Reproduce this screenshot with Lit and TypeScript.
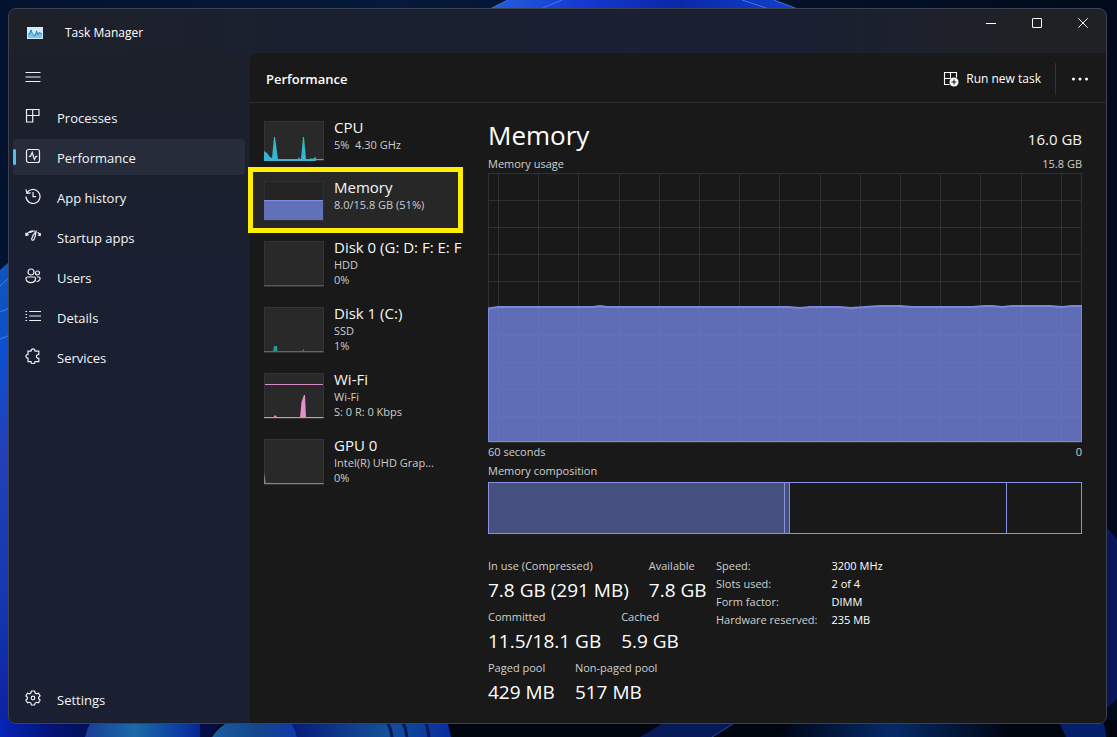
import { LitElement, html, svg, css } from "lit";
import { customElement } from "lit/decorators.js";
import { classMap } from "lit/directives/class-map.js";

const navItems = [
  { label: "Processes", icon: svg`<path d="M1.500 1.500h12.500v6H7.700v6.500H1.500zM7.700 1.500v6M1.500 7.500h6.200"/>` },
  { label: "Performance", icon: svg`<rect x="1.500" y="1.500" width="13" height="13" rx="2"/><path d="M3.800 8.300h1.700l1.700-3.800 2.200 7L11 8.300h1.400"/>` },
  { label: "App history", icon: svg`<path d="M1.800 5.200A7 7 0 1 1 1 8.500M1 1.400l.9 3.900 3.900-.4M8 4v4.600h3"/>` },
  { label: "Startup apps", icon: svg`<path d="M1 7.500c1-2.300 3-4 5.300-4.500M.8 4.700L1 7.500l2.800-.8M15.200 7.500c-.4-1.300-1.300-2.500-2.600-3.300M12.700 7l2.500.5.1-2.600M11 3.400c-1.800 2-3.800 5.600-4.300 7.300-.2 1.700 1.700 2.100 2.400.6.800-1.600 1.700-5.200 1.900-7.900zM4.500 4.600L8 3.200M6.300 3h3.700"/>` },
  { label: "Users", icon: svg`<circle cx="6" cy="4" r="3"/><circle cx="12.500" cy="5" r="2"/><path d="M2.500 9h6.500a1.500 1.500 0 0 1 1.500 1.500c0 2.600-2 4.200-4.700 4.200S1 13 1 10.500A1.500 1.500 0 0 1 2.500 9zM12 9h1.800a1.300 1.300 0 0 1 1.300 1.300c0 2-1.500 3.200-3.600 3.100"/>` },
  { label: "Details", icon: svg`<path d="M4.200 3.500H16M4.200 8H16M4.200 12.500H16M.5 3.500h1.600M.5 6.500h1.600M.5 9.500h1.600M.5 12.500h1.600"/>` },
  { label: "Services", icon: svg`<path d="M3 3.200h3c-.3-3 4.300-3 4 0h3.800v3.300c-3.200-.2-3.200 4 0 3.800v3.400H10c.2 2.700-4.200 2.700-4 0H3v-3.500c-2.700.2-2.700-3.900 0-3.700z"/>` },
];

const resources = [
  {
    name: "CPU", lines: ["5%  4.30 GHz"], height: 40, color: "#35b5cf",
    graph: svg`<path fill="#35b5cf" stroke="none" d="M0 30l3 2 3 4 2 1 2-21h1l3 22h20l1-2 1 2h1l2-22h1l2 22h4l1-1 1 1 4-2v4H0z"/><path d="M0 38.500h59.500"/>`,
  },
  {
    name: "Memory", lines: ["8.0/15.8 GB (51%)"], height: 40, color: "#7f8ce0", current: true,
    graph: svg`<path fill="#6270ba" stroke="none" d="M0 20h59v19H0z"/><path d="M0 19.500h59"/>`,
  },
  {
    name: "Disk 0 (G: D: F: E: F", lines: ["HDD", "0%"], height: 46, color: "#2f6f69",
    graph: svg`<path d="M0 44.500h59.500"/>`,
  },
  {
    name: "Disk 1 (C:)", lines: ["SSD", "1%"], height: 46, color: "#2f7d78",
    graph: svg`<path fill="#2b9a92" stroke="none" d="M9 45l1-6h3l.5 6zM38 45l1.500-3 1.500 3z"/><path d="M0 44.500h59.500"/>`,
  },
  {
    name: "Wi-Fi", lines: ["Wi-Fi", "S: 0 R: 0 Kbps"], height: 46, color: "#d98cc6",
    graph: svg`<path fill="#e78fd0" stroke="none" d="M36 45l1.500-16L40 22h1l1 23zM9 45l2-3 3 3z"/><path d="M1 11.500h58M0 44.500h59.500"/>`,
  },
  {
    name: "GPU 0", lines: ["Intel(R) UHD Grap...", "0%"], height: 46, color: "#87799f",
    graph: svg`<path fill="#87799f" stroke="none" d="M0 45V33l2 12zM4 45l1-2 1 2z"/><path d="M0 44.500h59.500"/>`,
  },
];

const statRows = [
  [["In use (Compressed)", "7.8 GB (291 MB)"], ["Available", "7.8 GB"]],
  [["Committed", "11.5/18.1 GB"], ["Cached", "5.9 GB"]],
  [["Paged pool", "429 MB"], ["Non-paged pool", "517 MB"]],
];

const hardware = [
  ["Speed:", "3200 MHz"],
  ["Slots used:", "2 of 4"],
  ["Form factor:", "DIMM"],
  ["Hardware reserved:", "235 MB"],
];

const composition = [
  { share: 296, used: true },
  { share: 5, used: true },
  { share: 217, used: false },
  { share: 74, used: false },
];

const usage = "M0 135.500L10 134H105l7-1 7 1H300l12 1 10-1h30l11 1 14-1 15-1h20l12 1h60l13-1h8l9 1 10-1h38l12 1 10-1h10";

@customElement("tm-sidebar")
export class TmSidebar extends LitElement {
  static styles = css`
    :host { display: flex; flex-direction: column; padding: 8px 5px 6px 4px; }
    button { font: inherit; color: inherit; background: none; border: 0; padding: 0; }
    .menu { width: 40px; height: 32px; display: grid; place-items: center; margin-bottom: 6px; }
    nav { display: flex; flex-direction: column; gap: 4px; flex: 1; }
    .item {
      display: flex; align-items: center; gap: 16px; height: 36px; padding: 0 12px;
      color: #f4f5f7; text-decoration: none; border-radius: 4px; position: relative;
      line-height: 20px;
    }
    .item span { padding-top: 1px; }
    .item.current { background: #272c3a; }
    .item.current::before {
      content: ""; position: absolute; left: 0; top: 10px; width: 3px; height: 16px;
      border-radius: 2px; background: #55bdf5;
    }
    .last { margin-top: auto; }
    svg { width: 16px; height: 16px; fill: none; stroke: #eef0f4; stroke-width: 1.2; flex: none; }
    .item svg { margin-bottom: 2px; }
  `;

  render() {
    return html`
      <button class="menu" aria-label="Open navigation">
        <svg viewBox="0 0 16 16"><path d="M.5 3.500h15M.5 8h15M.5 12.500h15" /></svg>
      </button>
      <nav>
        ${navItems.map(
          (n) => html`<a href="#" class=${classMap({ item: true, current: n.label === "Performance" })}>
            <svg viewBox="0 0 16 16">${n.icon}</svg><span>${n.label}</span></a>`,
        )}
        <a href="#" class="item last">
          <svg viewBox="0 0 16 16"><circle cx="8" cy="8" r="1.800" /><path d="M6.400 1h3.200l.5 2 1.400.8 2-.6 1.600 2.700-1.500 1.400v1.500l1.500 1.400-1.600 2.700-2-.6-1.400.8-.5 1.900H6.400l-.5-1.900-1.400-.8-2 .6-1.600-2.700 1.500-1.400V7.300L.9 5.900l1.600-2.700 2 .6L5.900 3z" /></svg>
          <span>Settings</span>
        </a>
      </nav>
    `;
  }
}

@customElement("tm-resources")
export class TmResources extends LitElement {
  static styles = css`
    :host { display: block; padding-top: 8px; }
    .row {
      font: inherit; color: #f6f6f6; text-align: left; background: none; border: 0;
      display: flex; align-items: flex-start; gap: 10px; width: 100%;
      padding: 10px 0 10px 14px; position: relative; min-height: 60px;
    }
    .row.current { background: linear-gradient(#272727, #272727) no-repeat 3px 0 / 205px 60px; }
    .row.current::after {
      content: ""; position: absolute; inset: -4px 0 -2px -2px; border: 5px solid #ffee00;
    }
    .thumb { width: 60px; flex: none; background: #292929; box-shadow: inset 0 0 0 1px #343434; fill: none; }
    .current .thumb { background: #242424; box-shadow: inset 0 0 0 1px #303030; }
    .text { min-width: 0; flex: 1; display: flex; flex-direction: column; margin-top: -4px; }
    .name { font-size: 15px; line-height: 20px; white-space: nowrap; }
    .line { font-size: 11px; line-height: 15px; color: #cdcdcd; white-space: pre; }
  `;

  render() {
    return html`${resources.map(
      (r) => html`<button class=${classMap({ row: true, current: !!r.current })}>
        <svg class="thumb" height=${r.height} viewBox="0 0 60 ${r.height}" stroke=${r.color}>${r.graph}</svg>
        <span class="text">
          <span class="name">${r.name}</span>
          ${r.lines.map((l) => html`<span class="line">${l}</span>`)}
        </span>
      </button>`,
    )}`;
  }
}

@customElement("tm-memory")
export class TmMemory extends LitElement {
  static styles = css`
    :host { display: block; min-width: 0; padding: 12px 24px 8px 25px; color: #cfcfcf; font-size: 11px; line-height: 18px; }
    .split { display: flex; justify-content: space-between; align-items: baseline; }
    h2 { margin: 0; font-size: 26px; font-weight: 400; line-height: 40px; color: #fff; }
    .total { font-size: 15px; color: #f4f4f4; }
    .chart { display: block; width: 100%; height: 270px; fill: none; }
    .grid { stroke: #313131; }
    .area { fill: #5f6db6; }
    .inner { stroke: #6371bb; }
    .edge { stroke: #7b87dc; stroke-width: 2; }
    .frame { stroke: #7b87dc; }
    .caption { padding-top: 1px; }
    .bar { display: flex; height: 50px; border: 1px solid #8692e4; margin-top: 2px; }
    .seg + .seg { border-left: 1px solid #8692e4; }
    .seg.used { background: #46507e; }
    .facts { display: flex; padding-top: 23px; }
    .stats { width: 228px; display: flex; flex-direction: column; gap: 2px; }
    .pair { display: flex; gap: 20px; }
    dl, dt, dd { margin: 0; }
    .stat { white-space: nowrap; line-height: 17px; }
    .big { font-size: 19px; line-height: 32px; color: #fff; }
    .hw { display: grid; grid-template-columns: max-content max-content; column-gap: 14px; align-content: start; }
    .hw dd { color: #fff; }
  `;

  render() {
    const cols = Array.from({ length: 15 }, (_, i) => 10.5 + Math.round(i * 40.2));
    const rows = Array.from({ length: 10 }, (_, i) => 0.5 + i * 27);
    const topRows = rows.filter((y) => y < 134);
    const lowRows = rows.filter((y) => y > 136);
    const px = "non-scaling-stroke";
    return html`
      <div class="split"><h2>Memory</h2><span class="total">16.0 GB</span></div>
      <div class="split"><span>Memory usage</span><span>15.8 GB</span></div>
      <svg class="chart" viewBox="0 0 594 270" preserveAspectRatio="none" role="img" aria-label="Memory usage">
        <rect class="grid" x=".5" y=".5" width="593" height="269" vector-effect=${px} />
        ${topRows.map((y) => svg`<path class="grid" vector-effect=${px} d="M0 ${y}H594" />`)}
        ${cols.map((x) => svg`<path class="grid" vector-effect=${px} d="M${x} 0V134" />`)}
        <path class="area" d="${usage}V269H0z" />
        ${lowRows.map((y) => svg`<path class="inner" vector-effect=${px} d="M0 ${y}H593" />`)}
        ${cols.map((x) => svg`<path class="inner" vector-effect=${px} d="M${x} 135V269" />`)}
        <path class="edge" vector-effect=${px} d=${usage} />
        <path class="frame" vector-effect=${px} d="M.5 135V268.500H593.500V133" />
      </svg>
      <div class="split"><span>60 seconds</span><span>0</span></div>
      <div class="caption">Memory composition</div>
      <div class="bar">
        ${composition.map((c) => html`<div class=${classMap({ seg: true, used: c.used })} style="flex: ${c.share} 1 0"></div>`)}
      </div>
      <div class="facts">
        <div class="stats">
          ${statRows.map((row) => html`<dl class="pair">${row.map(
            ([k, v]) => html`<div class="stat"><dt>${k}</dt><dd class="big">${v}</dd></div>`,
          )}</dl>`)}
        </div>
        <dl class="hw">${hardware.map(([k, v]) => html`<dt>${k}</dt><dd>${v}</dd>`)}</dl>
      </div>
    `;
  }
}

@customElement("app-root")
export class AppRoot extends LitElement {
  static styles = css`
    :host {
      box-sizing: border-box; min-height: 100vh; position: relative; padding: 8px 10px 13px 8px;
      font-family: "Open Sans", "Noto Sans", sans-serif; font-size: 13px; color: #fff; background: #020c22;
      display: flex; overflow: hidden;
    }
    .wall { position: absolute; inset: 0; width: 100%; height: 100%; }
    .window {
      position: relative; flex: 1; min-width: 0; box-sizing: border-box; border: 1px solid #3c4251; border-radius: 8px; overflow: hidden;
      display: grid; grid-template: 44px 1fr / 241px minmax(0, 1fr);
      background: linear-gradient(90deg, #1e2128 0%, #1b2030 25%, #1a2032 72%, #202124 95%);
    }
    .title { grid-column: 1 / -1; display: flex; align-items: flex-start; }
    .app { display: flex; align-items: center; gap: 22px; padding: 14px 0 0 18px; font-size: 12px; line-height: 20px; flex: 1; }
    .caption { font: inherit; background: none; border: 0; padding: 0; width: 46px; height: 28px; display: grid; place-items: center; }
    .caption svg { width: 10px; height: 10px; fill: none; stroke: #fff; }
    tm-sidebar { background: linear-gradient(#1c202a, #1a2031 30%, #1a2031); }
    main { background: #191919; border-top-left-radius: 8px; min-width: 0; }
    header { box-sizing: border-box; height: 50px; display: flex; align-items: center; border-bottom: 1px solid #2e2e30; padding: 2px 8px 0 16px; }
    h1 { margin: 0; flex: 1; font-size: 13px; line-height: 20px; font-weight: 600; }
    .run { font: inherit; font-size: 12px; color: #fff; background: none; border: 0; display: flex; align-items: center; gap: 7px; padding: 0 14px; }
    .run svg { width: 16px; height: 16px; fill: none; stroke: #fff; stroke-width: 1.100; }
    .more { background: none; border: 0; border-left: 1px solid #333; padding: 0 0 0 16px; height: 32px; display: grid; place-items: center; }
    .more svg { width: 16px; height: 16px; fill: #fff; margin-right: 10px; }
    .body { display: grid; grid-template-columns: 213px minmax(0, 1fr); }
  `;

  render() {
    return html`
      <svg class="wall" viewBox="0 0 1117 737" preserveAspectRatio="none" aria-hidden="true">
        <defs>
          <linearGradient id="sky"><stop offset="0" stop-color="#03132f" /><stop offset=".35" stop-color="#05193a" /><stop offset=".75" stop-color="#031027" /><stop offset="1" stop-color="#010a1c" /></linearGradient>
          <linearGradient id="side" x2="0" y2="1"><stop offset="0" stop-color="#0f55b8" /><stop offset=".2" stop-color="#0d4fd0" /><stop offset=".4" stop-color="#2440b8" /><stop offset=".7" stop-color="#1638b0" /><stop offset="1" stop-color="#0a1fa0" /></linearGradient>
          <linearGradient id="bloom"><stop offset="0" stop-color="#2560dc" /><stop offset=".3" stop-color="#1638d4" /><stop offset=".6" stop-color="#0a28a8" /><stop offset="1" stop-color="#1240d0" /></linearGradient>
          <linearGradient id="p0"><stop offset="0" stop-color="#0624b8" /><stop offset=".5" stop-color="#041478" /><stop offset="1" stop-color="#030f50" /></linearGradient>
          <linearGradient id="p1"><stop offset="0" stop-color="#1a3c94" /><stop offset=".4" stop-color="#1b6aa8" /><stop offset=".8" stop-color="#0a3aa0" /><stop offset="1" stop-color="#061c88" /></linearGradient>
          <linearGradient id="p2"><stop offset="0" stop-color="#1c5ca0" /><stop offset=".5" stop-color="#14488c" /><stop offset="1" stop-color="#1238a8" /></linearGradient>
          <linearGradient id="p3"><stop offset="0" stop-color="#061a78" /><stop offset=".6" stop-color="#145098" /><stop offset="1" stop-color="#0a2ca0" /></linearGradient>
          <linearGradient id="p4"><stop offset="0" stop-color="#010514" /><stop offset=".5" stop-color="#052a68" /><stop offset="1" stop-color="#010510" /></linearGradient>
        </defs>
        <rect width="1117" height="737" fill="url(#sky)" />
        <path fill="url(#bloom)" d="M488 10L508 0H774L800 10z" />
        <path fill="none" stroke="#3b78ea" d="M488 10L508 0M538 10l24-10M772 10L742 0M800 10L774 0" />
        <path fill="url(#side)" d="M0 270l10-9V737H0z" />
        <path fill="none" stroke="#3d83e8" d="M0 286l10-9M0 312l10-4M0 339l10-4" />
        <path fill="#010510" d="M8 720H1117V737H8z" />
        <path fill="url(#p0)" d="M0 720H100V737H0z" />
        <path fill="url(#p1)" d="M85 737q2-9 7-17H208l-2 17z" />
        <path fill="#030c44" d="M200 720h24l-14 17h-10z" />
        <path fill="url(#p2)" d="M212 737q6-10 20-17h58q6 8 7 17z" />
        <path fill="url(#p3)" d="M297 737q-2-9-8-17h158l4 17z" />
        <path fill="none" stroke="#061858" stroke-width="3" d="M386 720q5 8 6 17M402 720q4 8 5 17M425 720q3 8 4 17" />
        <path fill="#061a58" d="M640 737l28-17h72l-28 17z" />
        <path fill="none" stroke="#1d4cb4" d="M712 737l27-17" />
        <path fill="url(#p4)" d="M775 737l25-17h210v17z" />
        <path fill="#05206a" d="M1058 720h44q4 8 4 17h-40z" />
        <path fill="#07175a" d="M1106 527l11 12v160l-11 10z" />
      </svg>
      <div class="window">
        <div class="title">
          <div class="app">
            <svg width="16" height="12" viewBox="0 0 16 12" aria-hidden="true">
              <rect width="16" height="12" fill="#d3ebf9" /><path fill="#7cc3ee" d="M1 11V7l1.500-1L4 2l1.500 5L7 8l1 1 1.500-6L11 8l1.500-3L14 7l1-1v5z" /><path fill="none" stroke="#2182c8" d="M1 8l1.500-1L4 3l1.500 4L8 9l1.500-5L11 8l1.500-3L14 7h1" />
            </svg>
            <span>Task Manager</span>
          </div>
          <button class="caption" aria-label="Minimize"><svg viewBox="0 0 10 10"><path d="M0 5.500h10" /></svg></button>
          <button class="caption" aria-label="Maximize"><svg viewBox="0 0 10 10"><rect x=".5" y=".5" width="9" height="9" rx=".5" /></svg></button>
          <button class="caption" aria-label="Close"><svg viewBox="0 0 10 10"><path d="M.3.3l9.400 9.400M9.700.3L.3 9.700" /></svg></button>
        </div>
        <tm-sidebar></tm-sidebar>
        <main>
          <header>
            <h1>Performance</h1>
            <button class="run">
              <svg viewBox="0 0 16 16"><path d="M6.500 13.500h-5V1.500h12v5M7.500 1.500v6M1.500 7.500h6" /><circle cx="11" cy="11" r="4.500" fill="#fff" stroke="none" /><path stroke="#191919" d="M11 8.500v5M8.500 11h5" /></svg>
              <span>Run new task</span>
            </button>
            <button class="more" aria-label="More options"><svg viewBox="0 0 16 16"><circle cx="1.500" cy="8" r="1.500" /><circle cx="8" cy="8" r="1.500" /><circle cx="14.500" cy="8" r="1.500" /></svg></button>
          </header>
          <div class="body">
            <tm-resources></tm-resources>
            <tm-memory></tm-memory>
          </div>
        </main>
      </div>
    `;
  }
}
